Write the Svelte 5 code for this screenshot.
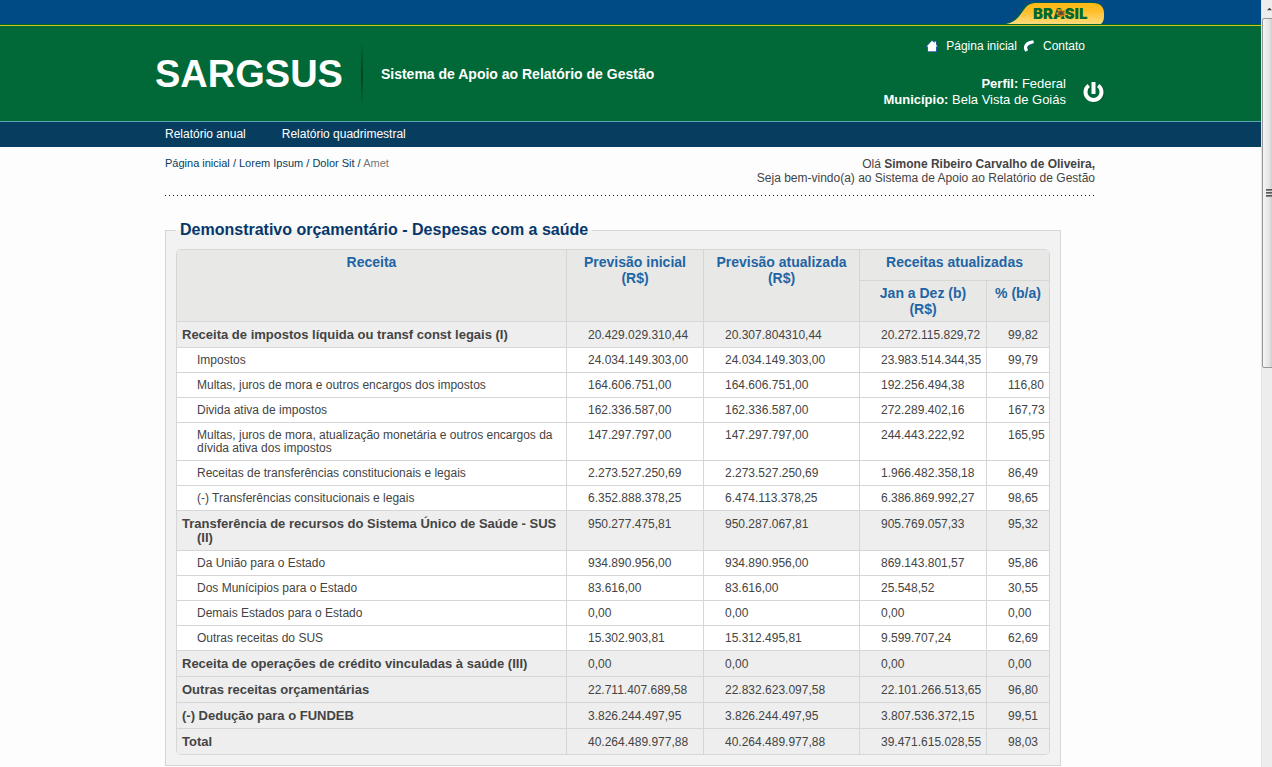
<script>
	const menu = ['Relatório anual', 'Relatório quadrimestral'];
	const trail = ['Página inicial', 'Lorem Ipsum', 'Dolor Sit'];

	const rows = [
		{ group: true, name: 'Receita de impostos líquida ou transf const legais (I)', values: ['20.429.029.310,44', '20.307.804310,44', '20.272.115.829,72', '99,82'] },
		{ name: 'Impostos', values: ['24.034.149.303,00', '24.034.149.303,00', '23.983.514.344,35', '99,79'] },
		{ name: 'Multas, juros de mora e outros encargos dos impostos', values: ['164.606.751,00', '164.606.751,00', '192.256.494,38', '116,80'] },
		{ name: 'Divida ativa de impostos', values: ['162.336.587,00', '162.336.587,00', '272.289.402,16', '167,73'] },
		{ name: 'Multas, juros de mora, atualização monetária e outros encargos da dívida ativa dos impostos', values: ['147.297.797,00', '147.297.797,00', '244.443.222,92', '165,95'] },
		{ name: 'Receitas de transferências constitucionais e legais', values: ['2.273.527.250,69', '2.273.527.250,69', '1.966.482.358,18', '86,49'] },
		{ name: '(-) Transferências consitucionais e legais', values: ['6.352.888.378,25', '6.474.113.378,25', '6.386.869.992,27', '98,65'] },
		{ group: true, name: 'Transferência de recursos do Sistema Único de Saúde - SUS (II)', values: ['950.277.475,81', '950.287.067,81', '905.769.057,33', '95,32'] },
		{ name: 'Da União para o Estado', values: ['934.890.956,00', '934.890.956,00', '869.143.801,57', '95,86'] },
		{ name: 'Dos Munícipios para o Estado', values: ['83.616,00', '83.616,00', '25.548,52', '30,55'] },
		{ name: 'Demais Estados para o Estado', values: ['0,00', '0,00', '0,00', '0,00'] },
		{ name: 'Outras receitas do SUS', values: ['15.302.903,81', '15.312.495,81', '9.599.707,24', '62,69'] },
		{ group: true, name: 'Receita de operações de crédito vinculadas à saúde (III)', values: ['0,00', '0,00', '0,00', '0,00'] },
		{ group: true, name: 'Outras receitas orçamentárias', values: ['22.711.407.689,58', '22.832.623.097,58', '22.101.266.513,65', '96,80'] },
		{ group: true, name: '(-) Dedução para o FUNDEB', values: ['3.826.244.497,95', '3.826.244.497,95', '3.807.536.372,15', '99,51'] },
		{ group: true, name: 'Total', values: ['40.264.489.977,88', '40.264.489.977,88', '39.471.615.028,55', '98,03'] }
	];
</script>

<div class="window">
	<div class="page">
		<div class="gov-bar">
			<div class="wide gov-inner">
				<a href="#brasil" aria-label="Brasil">
					<svg class="brasil" viewBox="0 0 102 22" width="102" height="22">
						<defs>
							<linearGradient id="gold" x1="0" y1="0" x2="0" y2="1">
								<stop offset="0" stop-color="#fdb913" />
								<stop offset="0.4" stop-color="#ffbf2b" />
								<stop offset="1" stop-color="#ffdb7d" />
							</linearGradient>
						</defs>
						<path d="M0 22C9 20 13 15 18 8C22 2 25 0 32 0H90C97 0 101 4 101 10V14C101 18 100 20 98 22H0Z" fill="#00672f" opacity="0.5" />
						<path d="M3 22C12 20 15 16 20 9C24 3 27 1 34 1H90C97 1 101 5 101 11V14C101 18 100 20 98 22Z" fill="url(#gold)" />
						<text x="30" y="17" fill="#00672f">BRASIL</text>
						<path d="M58 6l2 2.500 3-1-1 3 2 2-3 1-3 2-3-2-2-2 2-2-1-3 3 1z" fill="#c9a01c" />
						<path d="M58 8l1.500 1.500 2-.5-1 2 1 2-3.500.5-3.500-.5 1-2-1-2 2 .5z" fill="#a8441c" />
						<circle cx="58" cy="11" r="1.500" fill="#2d5a50" />
					</svg>
				</a>
			</div>
		</div>

		<header>
			<div class="wide header-inner">
				<h1>SARGSUS</h1>
				<p class="tagline">Sistema de Apoio ao Relatório de Gestão</p>
				<div class="user">
					<div class="shortcuts">
						<a href="#inicio">
							<svg viewBox="0 0 12 12" width="12" height="12">
								<path d="M6 0L8 1.500V1H10.500V4L12 6V7.500H11V12H1V7.500H0V6Z" fill="#2a5caa" />
								<path d="M6 .8L8.500 3V1.800H10V4.500L11.300 6.500H10V11.200H2V6.500H.7Z" fill="#fff" />
							</svg>
							Página inicial
						</a>
						<a href="#contato">
							<svg viewBox="0 0 12 12" width="12" height="12">
								<path d="M3 10.200C1.800 6.500 4.500 2.800 9.500 2.200" fill="none" stroke="#2a5caa" stroke-width="4" />
								<path d="M6.800 1L10.200.2L11 3L8 3.900C5.500 4.800 4.300 6 4 7.600L5 10.200L2.500 11.800C.6 9.500.4 6.500 2 4.200C3.300 2.400 4.900 1.500 6.800 1Z" fill="#fff" />
							</svg>
							Contato
						</a>
					</div>
					<div class="session">
						<p>
							<strong>Perfil:</strong> Federal<br />
							<strong>Município:</strong> Bela Vista de Goiás
						</p>
						<button class="logout" aria-label="Sair">
							<svg viewBox="0 0 22 22" width="22" height="22">
								<path d="M6.800 5.200A8 8 0 1 0 16.200 5.200" fill="none" stroke="#00431f" stroke-width="4" opacity="0.5" />
								<path d="M5.800 4.500A8 8 0 1 0 15.200 4.500" fill="none" stroke="#fff" stroke-width="4" />
								<path d="M10.500 1V13" stroke="#fff" stroke-width="4" />
							</svg>
						</button>
					</div>
				</div>
			</div>
		</header>

		<nav>
			<ul class="container">
				{#each menu as item}
					<li><a href="#menu">{item}</a></li>
				{/each}
			</ul>
		</nav>

		<main class="container">
			<div class="intro">
				<div class="breadcrumb">
					{#each trail as step}
						<a href="#trilha">{step}</a>{' / '}
					{/each}
					<span>Amet</span>
				</div>
				<p class="welcome">
					Olá <strong>Simone Ribeiro Carvalho de Oliveira,</strong><br />
					Seja bem-vindo(a) ao Sistema de Apoio ao Relatório de Gestão
				</p>
			</div>

			<fieldset>
				<legend>Demonstrativo orçamentário - Despesas com a saúde</legend>
				<table>
					<colgroup>
						<col />
						<col class="col-initial" />
						<col class="col-updated" />
						<col class="col-period" />
						<col class="col-percent" />
					</colgroup>
					<thead>
						<tr>
							<th rowspan="2">Receita</th>
							<th rowspan="2">Previsão inicial<br />(R$)</th>
							<th rowspan="2">Previsão atualizada<br />(R$)</th>
							<th colspan="2" class="span">Receitas atualizadas</th>
						</tr>
						<tr>
							<th>Jan a Dez (b)<br />(R$)</th>
							<th>% (b/a)</th>
						</tr>
					</thead>
					<tbody>
						{#each rows as row}
							<tr class:group={row.group}>
								<td class="name">{row.name}</td>
								{#each row.values as value}
									<td>{value}</td>
								{/each}
							</tr>
						{/each}
					</tbody>
				</table>
			</fieldset>
		</main>
	</div>

	<div class="scrollbar" aria-hidden="true">
		<div class="arrow">
			<svg viewBox="0 0 8 4" width="8" height="4">
				<path d="M0 4L4 0L8 4Z" fill="#404040" />
			</svg>
		</div>
		<div class="thumb">
			<i></i>
			<i></i>
			<i></i>
		</div>
	</div>
</div>

<style>
	:global(body) {
		margin: 0;
		background: #fdfdfd;
		color: #444;
		font-family: Arial, 'Liberation Sans', sans-serif;
		font-size: 12px;
		line-height: 14px;
	}

	.window {
		display: flex;
		min-height: 100vh;
	}

	.page {
		flex: 1;
		min-width: 0;
	}

	.wide {
		max-width: 950px;
		margin: 0 auto;
		padding-right: 1px;
	}

	.container {
		max-width: 930px;
		margin: 0 auto;
		padding: 0 1px 0 0;
	}

	a {
		color: inherit;
		text-decoration: none;
	}

	h1,
	p {
		margin: 0;
	}

	.gov-bar {
		background: #004b85;
		border-bottom: 1px solid #00672f;
	}

	.gov-inner {
		display: flex;
		justify-content: flex-end;
		padding-top: 2px;
	}

	.gov-inner a {
		display: block;
		height: 22px;
	}

	.brasil {
		display: block;
	}

	.brasil text {
		font-family: Inter, sans-serif;
		font-size: 15px;
		font-weight: 900;
	}

	header {
		background: #006937;
		border-top: 1px solid #d3c01c;
		border-bottom: 1px solid #5ba3b5;
		color: #fff;
	}

	.header-inner {
		display: flex;
		align-items: center;
		height: 95px;
	}

	h1 {
		font-size: 38px;
		line-height: 64px;
		padding-right: 18px;
	}

	.tagline {
		font-size: 14px;
		font-weight: bold;
		line-height: 64px;
		padding-left: 20px;
		background: linear-gradient(transparent, #00431f, transparent) left / 2px 100% no-repeat;
	}

	.user {
		flex: 1;
		display: flex;
		flex-direction: column;
		align-self: stretch;
		align-items: flex-end;
		padding-top: 13px;
	}

	.shortcuts {
		display: flex;
		gap: 6px;
		padding-right: 20px;
	}

	.shortcuts a {
		display: flex;
		align-items: center;
		gap: 8px;
	}

	.session {
		display: flex;
		align-items: center;
		gap: 17px;
		margin-top: 23px;
		text-align: right;
		font-size: 13px;
		line-height: 16px;
	}

	.logout {
		display: block;
		padding: 0;
		border: 0;
		background: none;
		cursor: pointer;
	}

	.logout svg {
		display: block;
	}

	nav {
		background: #073e5f;
		color: #fff;
	}

	nav ul {
		display: flex;
		gap: 36px;
		list-style: none;
		line-height: 25px;
	}

	.intro {
		display: flex;
		justify-content: space-between;
		padding: 10px 0 11px;
		background: repeating-linear-gradient(90deg, #111 0 1px, transparent 1px 4px) bottom / 100% 1px no-repeat;
	}

	.breadcrumb {
		font-size: 11px;
		line-height: 12px;
		color: #073e5f;
	}

	.breadcrumb span {
		color: #777;
	}

	.welcome {
		text-align: right;
	}

	fieldset {
		margin: 24px 34px 0 0;
		padding: 9px 10px 10px;
		border: 1px solid #d6d6d6;
		background: #f2f2f2;
	}

	legend {
		padding: 0 4px;
		color: #06376b;
		font-size: 16px;
		font-weight: bold;
		line-height: 20px;
	}

	table {
		width: 100%;
		table-layout: fixed;
		border: 1px solid #d6d6d6;
		border-radius: 5px;
		border-spacing: 0;
		overflow: hidden;
		background: #fff;
	}

	.col-initial {
		width: 137px;
	}

	.col-updated {
		width: 156px;
	}

	.col-period {
		width: 127px;
	}

	.col-percent {
		width: 62px;
	}

	th {
		padding: 4px 0;
		vertical-align: top;
		background: #e8e8e7;
		border-bottom: 1px solid #d6d6d6;
		border-right: 1px solid #d6d6d6;
		color: #1f65a4;
		font-size: 14px;
		line-height: 16px;
	}

	.span {
		padding-bottom: 10px;
	}

	td {
		padding: 6px 0 5px 21px;
		vertical-align: top;
		border-bottom: 1px solid #d6d6d6;
		border-right: 1px solid #d6d6d6;
		line-height: 13px;
	}

	.name {
		padding-left: 20px;
	}

	td:last-child,
	th:last-child {
		border-right: 0;
	}

	tr:last-child td {
		border-bottom: 0;
	}

	.group td {
		background: #eee;
		line-height: 14px;
	}

	.group .name {
		font-size: 13px;
		font-weight: bold;
		text-indent: -15px;
	}

	.scrollbar {
		position: sticky;
		top: 0;
		width: 10px;
		height: 100vh;
		border-left: 1px solid #e4e4e4;
		background: #ededed;
		overflow: hidden;
	}

	.arrow {
		display: flex;
		align-items: center;
		height: 18px;
		padding-left: 5px;
	}

	.thumb {
		display: flex;
		flex-direction: column;
		justify-content: center;
		gap: 1px;
		width: 16px;
		height: 348px;
		border: 1px solid #979797;
		border-radius: 2px;
		background: linear-gradient(90deg, #f5f5f5, #e3e3e3 40%, #c8c8c8 60%, #ddd);
	}

	.thumb i {
		height: 2px;
		margin-left: 3px;
		background: linear-gradient(#444, #999);
	}
</style>
